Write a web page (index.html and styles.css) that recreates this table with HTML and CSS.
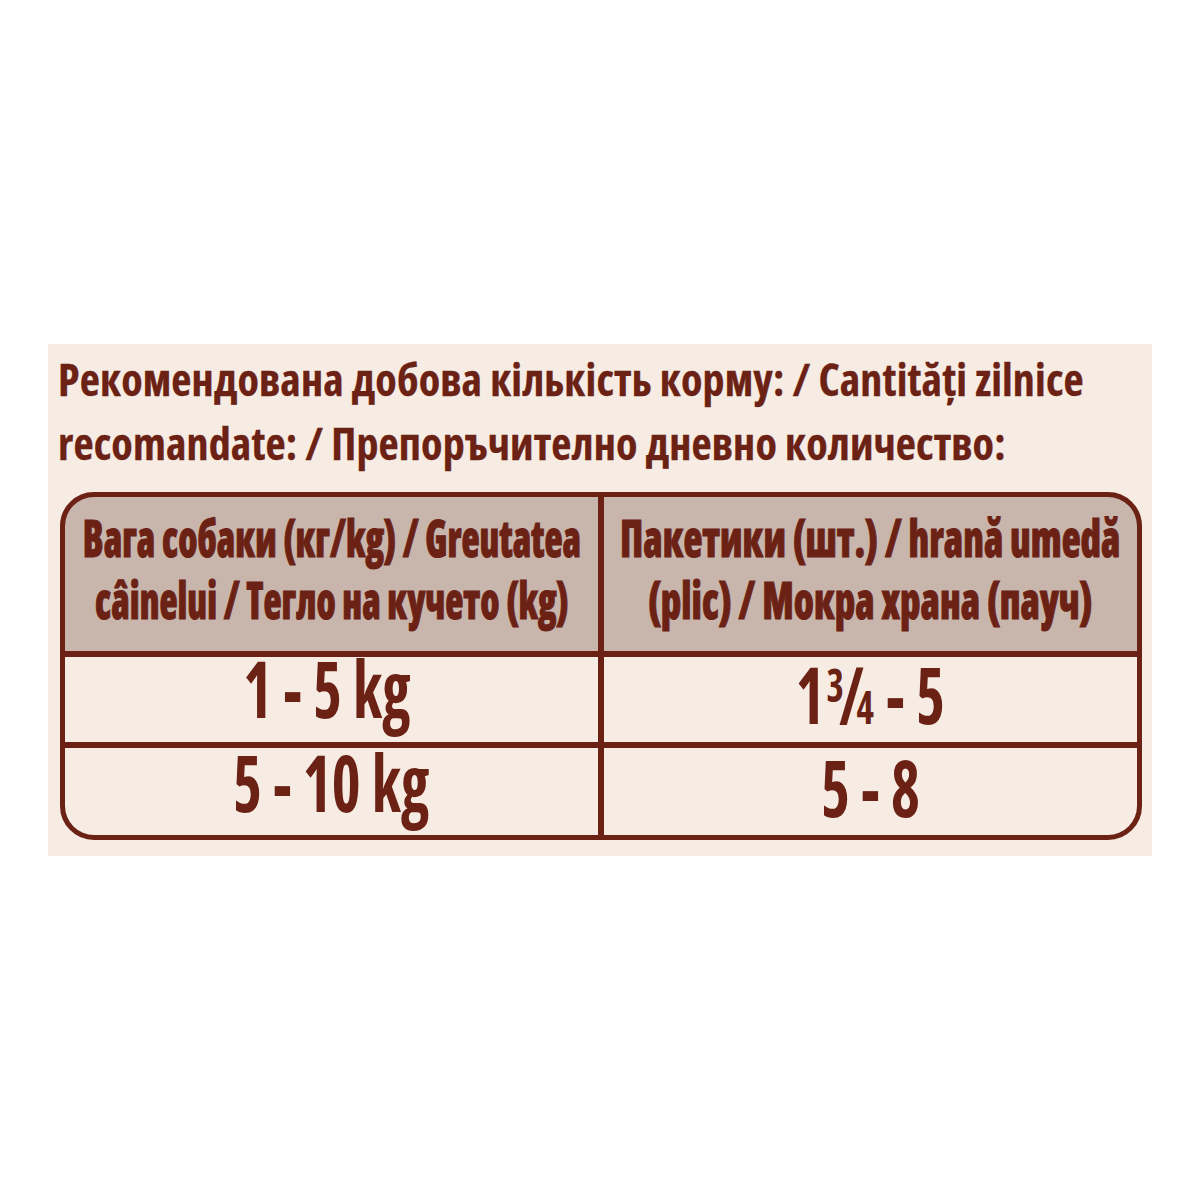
FILE: index.html
```html
<!DOCTYPE html>
<html lang="uk">
<head>
<meta charset="utf-8">
<title>Feeding table</title>
<link rel="stylesheet" href="styles.css">
</head>
<body>
<div class="page">
  <section class="panel">
    <h1 class="title">Рекомендована добова кількість корму: / Cantități zilnice<br>recomandate: / Препоръчително дневно количество:</h1>
    <div class="table">
      <div class="cell head"><div class="sq sq-head col1"><div>Вага собаки (кг/kg) / Greutatea</div><div>câinelui / Тегло на кучето (kg)</div></div></div>
      <div class="cell head"><div class="sq sq-head col2"><div>Пакетики (шт.) / hrană umedă</div><div>(plic) / Мокра храна (пауч)</div></div></div>
      <div class="cell row1"><div class="sq sq-val left">1 - 5 kg</div></div>
      <div class="cell row1"><div class="sq sq-val right">1<span class="frac"><span class="fn">3</span><span class="fs">/</span><span class="fd">4</span></span> - 5</div></div>
      <div class="cell row2"><div class="sq sq-val left">5 - 10 kg</div></div>
      <div class="cell row2"><div class="sq sq-val right">5 - 8</div></div>
    </div>
  </section>
</div>
</body>
</html>
```
FILE: styles.css
```css
html, body {
  margin: 0;
  padding: 0;
  background: #ffffff;
}

.page {
  padding: 344px 48px 0 48px;
  font-family: "Open Sans", "Noto Sans", sans-serif;
  font-stretch: 75%;
  color: #6b2215;
}

.panel {
  background: #f6ece3;
  height: 512px;
  box-sizing: border-box;
  padding: 3px 10px 0 10px;
}

.title {
  margin: 0;
  font-size: 44px;
  font-weight: 700;
  line-height: 64px;
  white-space: nowrap;
  letter-spacing: 0.14px;
  -webkit-text-stroke: 0.3px #6b2215;
}

.table {
  margin: 17px 0 0 2px;
  width: 1082px;
  box-sizing: border-box;
  border: 5px solid #6b2215;
  border-radius: 34px;
  overflow: hidden;
  background: #6b2215;
  display: grid;
  grid-template-columns: 1fr 1fr;
  grid-template-rows: 154px 85px 87px;
  column-gap: 6px;
  row-gap: 6px;
}

.cell {
  display: flex;
  justify-content: center;
  align-items: flex-start;
  background: #f6ece3;
  min-width: 0;
}

.head {
  background: #c8b6ad;
  padding-top: 9px;
}

.sq {
  white-space: nowrap;
  text-align: center;
  flex: none;
  transform-origin: 50% 50%;
}

.sq-head {
  font-size: 52px;
  font-weight: 800;
  line-height: 62px;
  -webkit-text-stroke: 1px #6b2215;
}

.sq-head.col1 {
  transform: scaleX(0.72);
}

.sq-head.col2 {
  transform: scaleX(0.753);
}

.sq-val {
  font-size: 78px;
  font-weight: 700;
  line-height: 80px;
  transform: scaleX(0.79);
}

.row1 .left {
  margin-top: -9px;
  margin-left: -10px;
}

.row1 .right {
  margin-top: -3px;
}

.row2 .left {
  margin-top: -6px;
}

.row2 .right {
  margin-top: -1px;
}

.frac {
  display: inline-block;
  line-height: 0;
  margin-left: 0.03em;
  margin-right: 0.02em;
}

.fn {
  font-size: 0.6em;
  line-height: 0;
  vertical-align: 0.47em;
}

.fs {
  line-height: 0;
  margin: 0 -0.12em 0 -0.08em;
}

.fd {
  font-size: 0.6em;
  line-height: 0;
}
```
